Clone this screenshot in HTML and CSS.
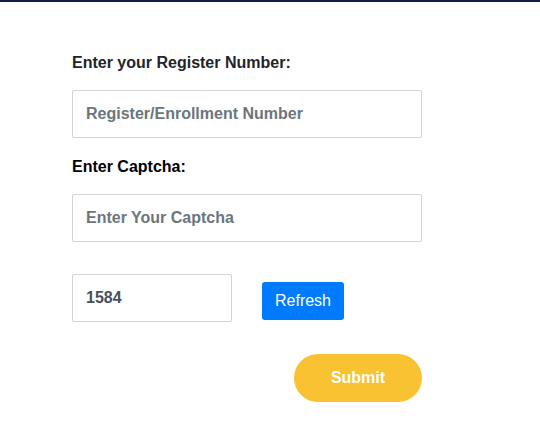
FILE: index.html
```html
<!DOCTYPE html>
<html>
<head>
<meta charset="utf-8">
<link rel="stylesheet" href="styles.css">
</head>
<body>
<div class="topbar"></div>
<form class="form">
  <label class="label">Enter your Register Number:</label>
  <input class="field" type="text" placeholder="Register/Enrollment Number">
  <label class="label label-dark">Enter Captcha:</label>
  <input class="field" type="text" placeholder="Enter Your Captcha">
  <div class="captcha-row">
    <input class="field captcha" type="text" value="1584" readonly>
    <button type="button" class="refresh">Refresh</button>
  </div>
  <div class="submit-row">
    <button type="button" class="submit">Submit</button>
  </div>
</form>
</body>
</html>
```
FILE: styles.css
```css
* { box-sizing: border-box; }
html, body { margin: 0; padding: 0; background: #fff; }
body { font-family: "Liberation Sans", Arial, sans-serif; }
.topbar { height: 2px; background: #151a4f; }
.form {
  width: 350px;
  margin-left: 72px;
  padding-top: 51px;
  display: flex;
  flex-direction: column;
}
.label {
  font-size: 16px;
  font-weight: bold;
  color: #212529;
  line-height: 20px;
  margin-bottom: 17px;
}
.label-dark { color: #000; }
.field {
  width: 350px;
  height: 48px;
  border: 1px solid #ced4da;
  border-radius: 2px;
  padding: 0 13px;
  font-family: inherit;
  font-size: 16px;
  font-weight: bold;
  color: #495057;
  margin-bottom: 19px;
  outline: none;
}
.field::placeholder { color: #6c757d; opacity: 1; }
.captcha-row {
  display: flex;
  align-items: flex-start;
  margin-top: 13px;
}
.captcha { width: 160px; margin-bottom: 0; }
.refresh {
  margin-left: 30px;
  margin-top: 8px;
  width: 82px;
  height: 38px;
  background: #007bff;
  color: #fff;
  border: none;
  border-radius: 3px;
  font-family: inherit;
  font-size: 16px;
}
.submit-row {
  display: flex;
  justify-content: flex-end;
  margin-top: 32px;
}
.submit {
  width: 128px;
  height: 48px;
  border: none;
  border-radius: 24px;
  background: #f9c232;
  color: #fff;
  font-family: inherit;
  font-size: 16px;
  font-weight: bold;
}
```
